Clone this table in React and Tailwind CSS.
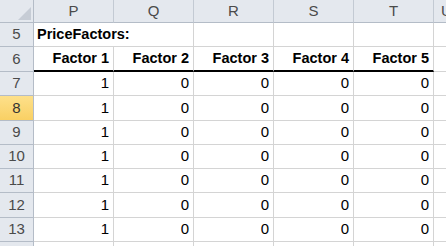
import React from 'react';

const cols = ['P', 'Q', 'R', 'S', 'T'];
const heights = ['h-[24px]', 'h-[25px]', 'h-[24px]', 'h-[25px]', 'h-[24px]', 'h-[24px]', 'h-[24px]', 'h-[25px]', 'h-[24px]'];

// rows 5..13
const rows = [
  { n: 5, kind: 'title' },
  { n: 6, kind: 'head' },
  { n: 7, vals: [1, 0, 0, 0, 0] },
  { n: 8, vals: [1, 0, 0, 0, 0], sel: true },
  { n: 9, vals: [1, 0, 0, 0, 0] },
  { n: 10, vals: [1, 0, 0, 0, 0] },
  { n: 11, vals: [1, 0, 0, 0, 0] },
  { n: 12, vals: [1, 0, 0, 0, 0] },
  { n: 13, vals: [1, 0, 0, 0, 0] },
];

function RowHead({ n, sel, h }) {
  return (
    <div
      className={`${h} w-[34px] shrink-0 flex items-center justify-center border-r border-b border-[#b4bcc7] text-[15px] ${
        sel ? 'bg-gradient-to-b from-[#fde08a] to-[#f9d063] text-[#333]' : 'bg-[#e4e8ee] text-[#4a4a4a]'
      }`}
    >
      {n}
    </div>
  );
}

export default function App() {
  return (
    <div
      className="w-[446px] h-[246px] overflow-hidden bg-white text-black"
      style={{ fontFamily: '"Liberation Sans", Arial, sans-serif' }}
    >
      {/* column headers */}
      <div className="flex h-[23px]">
        <div className="relative w-[34px] shrink-0 bg-[#e4e8ee] border-r border-b border-[#b4bcc7]">
          <div className="absolute right-[2px] bottom-[2px] w-0 h-0 border-l-[13px] border-l-transparent border-b-[13px] border-b-[#c6ccd5]" />
        </div>
        {cols.map((c) => (
          <div
            key={c}
            className="w-[80px] shrink-0 flex items-center justify-center bg-[#e4e8ee] border-r border-b border-[#c3cad3] border-b-[#b4bcc7] text-[15px] text-[#4a4a4a]"
          >
            {c}
          </div>
        ))}
        <div className="w-[80px] shrink-0 flex items-center pl-[7px] bg-[#e4e8ee] border-b border-[#b4bcc7] text-[15px] text-[#4a4a4a]">
          U
        </div>
      </div>

      {rows.map((r, i) => {
        const h = heights[i];
        if (r.kind === 'title') {
          return (
            <div key={r.n} className="flex">
              <RowHead n={r.n} h={h} />
              <div className={`${h} w-[80px] shrink-0 border-b border-[#d4d4d4] flex items-center pl-[3px] font-bold text-[14.5px] whitespace-nowrap`}>
                PriceFactors:
              </div>
              {[1, 2, 3, 4, 5].map((k) => (
                <div key={k} className={`${h} w-[80px] shrink-0 border-r border-b border-[#d4d4d4]`} />
              ))}
            </div>
          );
        }
        if (r.kind === 'head') {
          return (
            <div key={r.n} className="flex">
              <RowHead n={r.n} h={h} />
              {[1, 2, 3, 4, 5].map((k) => (
                <div
                  key={k}
                  className={`${h} w-[80px] shrink-0 border-r border-r-[#d4d4d4] border-b-2 border-b-black flex items-center justify-end pr-[4px] font-bold text-[14.5px]`}
                >
                  Factor {k}
                </div>
              ))}
              <div className={`${h} w-[80px] shrink-0 border-b border-[#d4d4d4]`} />
            </div>
          );
        }
        return (
          <div key={r.n} className="flex">
            <RowHead n={r.n} h={h} sel={r.sel} />
            {r.vals.map((v, k) => (
              <div
                key={k}
                className={`${h} w-[80px] shrink-0 border-r border-b border-[#d4d4d4] flex items-center justify-end pr-[4px] text-[15px]`}
              >
                {v}
              </div>
            ))}
            <div className={`${h} w-[80px] shrink-0 border-b border-[#d4d4d4]`} />
          </div>
        );
      })}

      <div className="flex">
        <div className="h-[24px] w-[34px] shrink-0 bg-[#e4e8ee] border-r border-[#b4bcc7]" />
        {cols.map((c) => (
          <div key={c} className="h-[24px] w-[80px] shrink-0 border-r border-[#d4d4d4]" />
        ))}
      </div>
    </div>
  );
}
